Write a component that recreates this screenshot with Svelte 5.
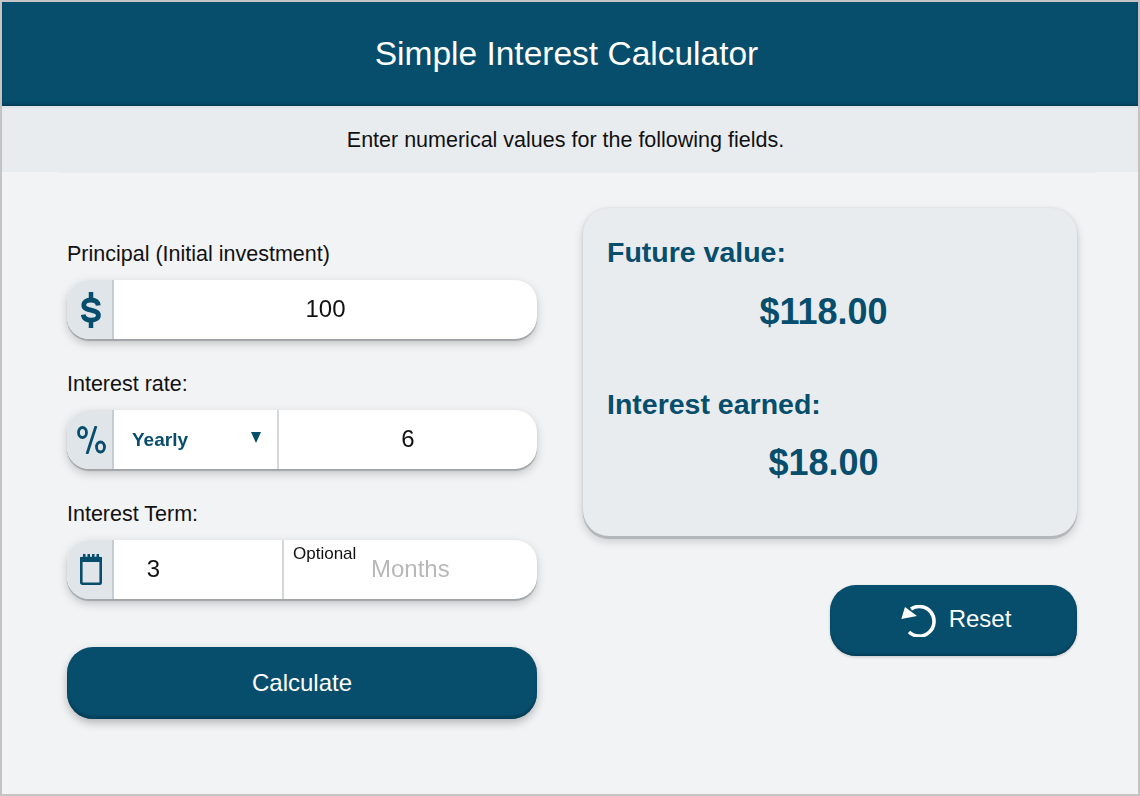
<script>
  // static snapshot of the calculator, values as in the reference
  let principal = $state('100');
  let rate = $state('6');
  let term = $state('3');
</script>

<div class="calc">
  <header class="head"><h1>Simple Interest Calculator</h1></header>
  <p class="hint">Enter numerical values for the following fields.</p>

  <main class="body">
    <section class="form">
      <label class="lbl" for="principal">Principal (Initial investment)</label>
      <div class="field">
        <span class="addon">
          <svg width="20" height="36" viewBox="0 0 20 36" aria-hidden="true">
            <path d="M10 0v7M10 29v7" stroke="#074d6c" stroke-width="4.500" fill="none"/>
            <path d="M17.300 13.500C16.800 9.800 14 8 10 8 5.700 8 2.800 10 2.800 13.200c0 6.600 14.600 3.400 14.600 10 0 3-3 4.900-7.400 4.900-4.500 0-7.300-2-7.800-5.500" stroke="#074d6c" stroke-width="4.800" fill="none"/>
          </svg>
        </span>
        <input id="principal" class="val" bind:value={principal} />
      </div>

      <label class="lbl" for="rate">Interest rate:</label>
      <div class="field">
        <span class="addon">
          <svg width="29" height="28" viewBox="0 0 29 28" aria-label="percent">
            <ellipse cx="5.500" cy="6.500" rx="4" ry="5" fill="none" stroke="#074d6c" stroke-width="2.800"/>
            <ellipse cx="23.500" cy="21" rx="4" ry="5" fill="none" stroke="#074d6c" stroke-width="2.800"/>
            <path d="M19 0 10 28" stroke="#074d6c" stroke-width="2.800"/>
          </svg>
        </span>
        <div class="period">
          <span>Yearly</span>
          <svg class="caret" width="10" height="11" viewBox="0 0 10 11" aria-hidden="true"><path d="M0 0h10L5 11z" fill="#074d6c"/></svg>
        </div>
        <input id="rate" class="val rate" bind:value={rate} />
      </div>

      <label class="lbl" for="term">Interest Term:</label>
      <div class="field">
        <span class="addon">
          <svg width="22" height="31" viewBox="0 0 22 31" aria-hidden="true">
            <rect x="1.300" y="4" width="19.400" height="25.700" rx="1.200" fill="none" stroke="#074d6c" stroke-width="2.600"/>
            <path d="M0 3h22v5H0z" fill="#074d6c"/>
            <path d="M3 0h2.500v3H3zM7.500 0H10v3H7.500zM12 0h2.500v3H12zM16.500 0H19v3h-2.500z" fill="#074d6c"/>
          </svg>
        </span>
        <input id="term" class="val term" bind:value={term} />
        <div class="unit">
          <span class="opt">Optional</span>
          <span class="months">Months</span>
        </div>
      </div>

      <button class="btn calc-btn" type="button">Calculate</button>
    </section>

    <section class="side">
      <div class="result">
        <h2>Future value:</h2>
        <p class="amt">$118.00</p>
        <h2 class="second">Interest earned:</h2>
        <p class="amt last">$18.00</p>
      </div>
      <button class="btn reset" type="button">
        <svg width="36" height="32" viewBox="0 0 36 32" aria-hidden="true">
          <path d="M10 4A14.800 14.800 0 1 1 8 27" fill="none" stroke="#fff" stroke-width="3.600"/>
          <path d="M.3 14 4 2l12 9z" fill="#fff"/>
        </svg>
        <span>Reset</span>
      </button>
    </section>
  </main>
</div>

<style>
  :global(body) {
    margin: 0;
    background: #f2f3f5;
  }

  .calc {
    box-sizing: border-box;
    width: 1140px;
    height: 796px;
    border: 2px solid #c4c4c4;
    background: #f2f3f5;
    font-family: "Liberation Sans", Arial, sans-serif;
    color: #111;
  }

  .head {
    box-sizing: border-box;
    height: 104px;
    padding: 0 7px 1px 0;
    background: #074d6c;
    display: flex;
    align-items: center;
    justify-content: center;
    box-shadow: inset 0 -2px 2px #063f59;
  }

  h1 {
    margin: 0;
    color: #fff;
    font-size: 33.500px;
    font-weight: 400;
  }

  .hint {
    box-sizing: border-box;
    position: relative;
    margin: 0;
    height: 66px;
    padding: 2px 9px 0 0;
    background: #e9ecef;
    display: flex;
    align-items: center;
    justify-content: center;
    font-size: 21.500px;
    box-shadow: inset 0 2px 2px #dfe3e6;
  }

  /* the centre of the band runs a pixel lower than its ends */
  .hint::after {
    content: "";
    position: absolute;
    left: 58px;
    right: 41px;
    bottom: -1px;
    height: 1px;
    background: #e9ecef;
  }

  .body {
    display: grid;
    grid-template-columns: 470px 494px;
    column-gap: 46px;
    padding: 36px 0 0 65px;
  }

  .form {
    display: flex;
    flex-direction: column;
    padding-top: 32px;
  }

  .lbl {
    font-size: 21.500px;
    line-height: 28px;
    margin-bottom: 12px;
  }

  .field {
    display: flex;
    height: 59px;
    margin-bottom: 31px;
    border-radius: 22px;
    background: #fff;
    overflow: hidden;
    box-shadow: 0 2px 1px #a0a4a7;
    flex-shrink: 0;
    filter: drop-shadow(0 3px 4px rgba(0, 0, 0, .18));
  }

  .addon {
    box-sizing: border-box;
    width: 47px;
    padding-left: 3px;
    flex: none;
    background: #dfe5e9;
    border-right: 2px solid #c6cdd2;
    display: flex;
    align-items: center;
    justify-content: center;
  }

  .val {
    flex: 1;
    min-width: 0;
    border: 0;
    outline: 0;
    padding: 0 0 1px;
    background: transparent;
    text-align: center;
    font: 24px "Liberation Sans", Arial, sans-serif;
    color: #111;
  }

  .period {
    width: 165px;
    flex: none;
    box-sizing: border-box;
    padding: 0 16px 0 18px;
    border-right: 2px solid #d5d8da;
    display: flex;
    align-items: center;
    justify-content: space-between;
    color: #074d6c;
    font-size: 19px;
    font-weight: 700;
  }

  .caret {
    margin-bottom: 4px;
  }

  .term {
    flex: none;
    width: 170px;
    box-sizing: border-box;
    padding-right: 90px;
    padding-left: 1px;
    border-right: 2px solid #d5d8da;
  }

  .unit {
    flex: 1;
    position: relative;
  }

  .opt {
    position: absolute;
    left: 9px;
    top: 4px;
    font-size: 17px;
  }

  .months {
    position: absolute;
    left: 87px;
    top: 15px;
    font-size: 24px;
    color: #b8b8b8;
  }

  .btn {
    border: 0;
    background: #074d6c;
    color: #fff;
    font: 24px "Liberation Sans", Arial, sans-serif;
    box-shadow: inset 0 -3px 2px #063f59, 0 4px 8px rgba(0, 0, 0, .25);
  }

  .calc-btn {
    height: 72px;
    margin-top: 17px;
    padding-top: 1px;
    border-radius: 26px;
  }

  .side {
    display: flex;
    flex-direction: column;
    align-items: flex-end;
  }

  .result {
    box-sizing: border-box;
    width: 494px;
    height: 328px;
    padding: 28px 37px 0 24px;
    background: #e9ecef;
    border-radius: 26px;
    box-shadow: 0 3px 0 #b4b7b9, 0 5px 10px rgba(0, 0, 0, .18), 0 0 3px rgba(0, 0, 0, .1);
  }

  h2 {
    margin: 0;
    color: #074d6c;
    font-size: 28.500px;
    font-weight: 700;
  }

  .second {
    margin-top: 55px;
  }

  .amt {
    margin: 22px 0 0;
    text-align: center;
    color: #074d6c;
    font-size: 36px;
    font-weight: 700;
  }

  .last {
    margin-top: 21px;
  }

  .reset {
    width: 247px;
    height: 71px;
    margin-top: 49px;
    padding: 0 0 3px 5px;
    border-radius: 26px;
    display: flex;
    align-items: center;
    justify-content: center;
    gap: 12px;
    box-shadow: inset 0 -2px 2px #063f59, 0 1px 3px rgba(0, 0, 0, .2);
  }

  .reset svg {
    margin-top: 3px;
  }
</style>
